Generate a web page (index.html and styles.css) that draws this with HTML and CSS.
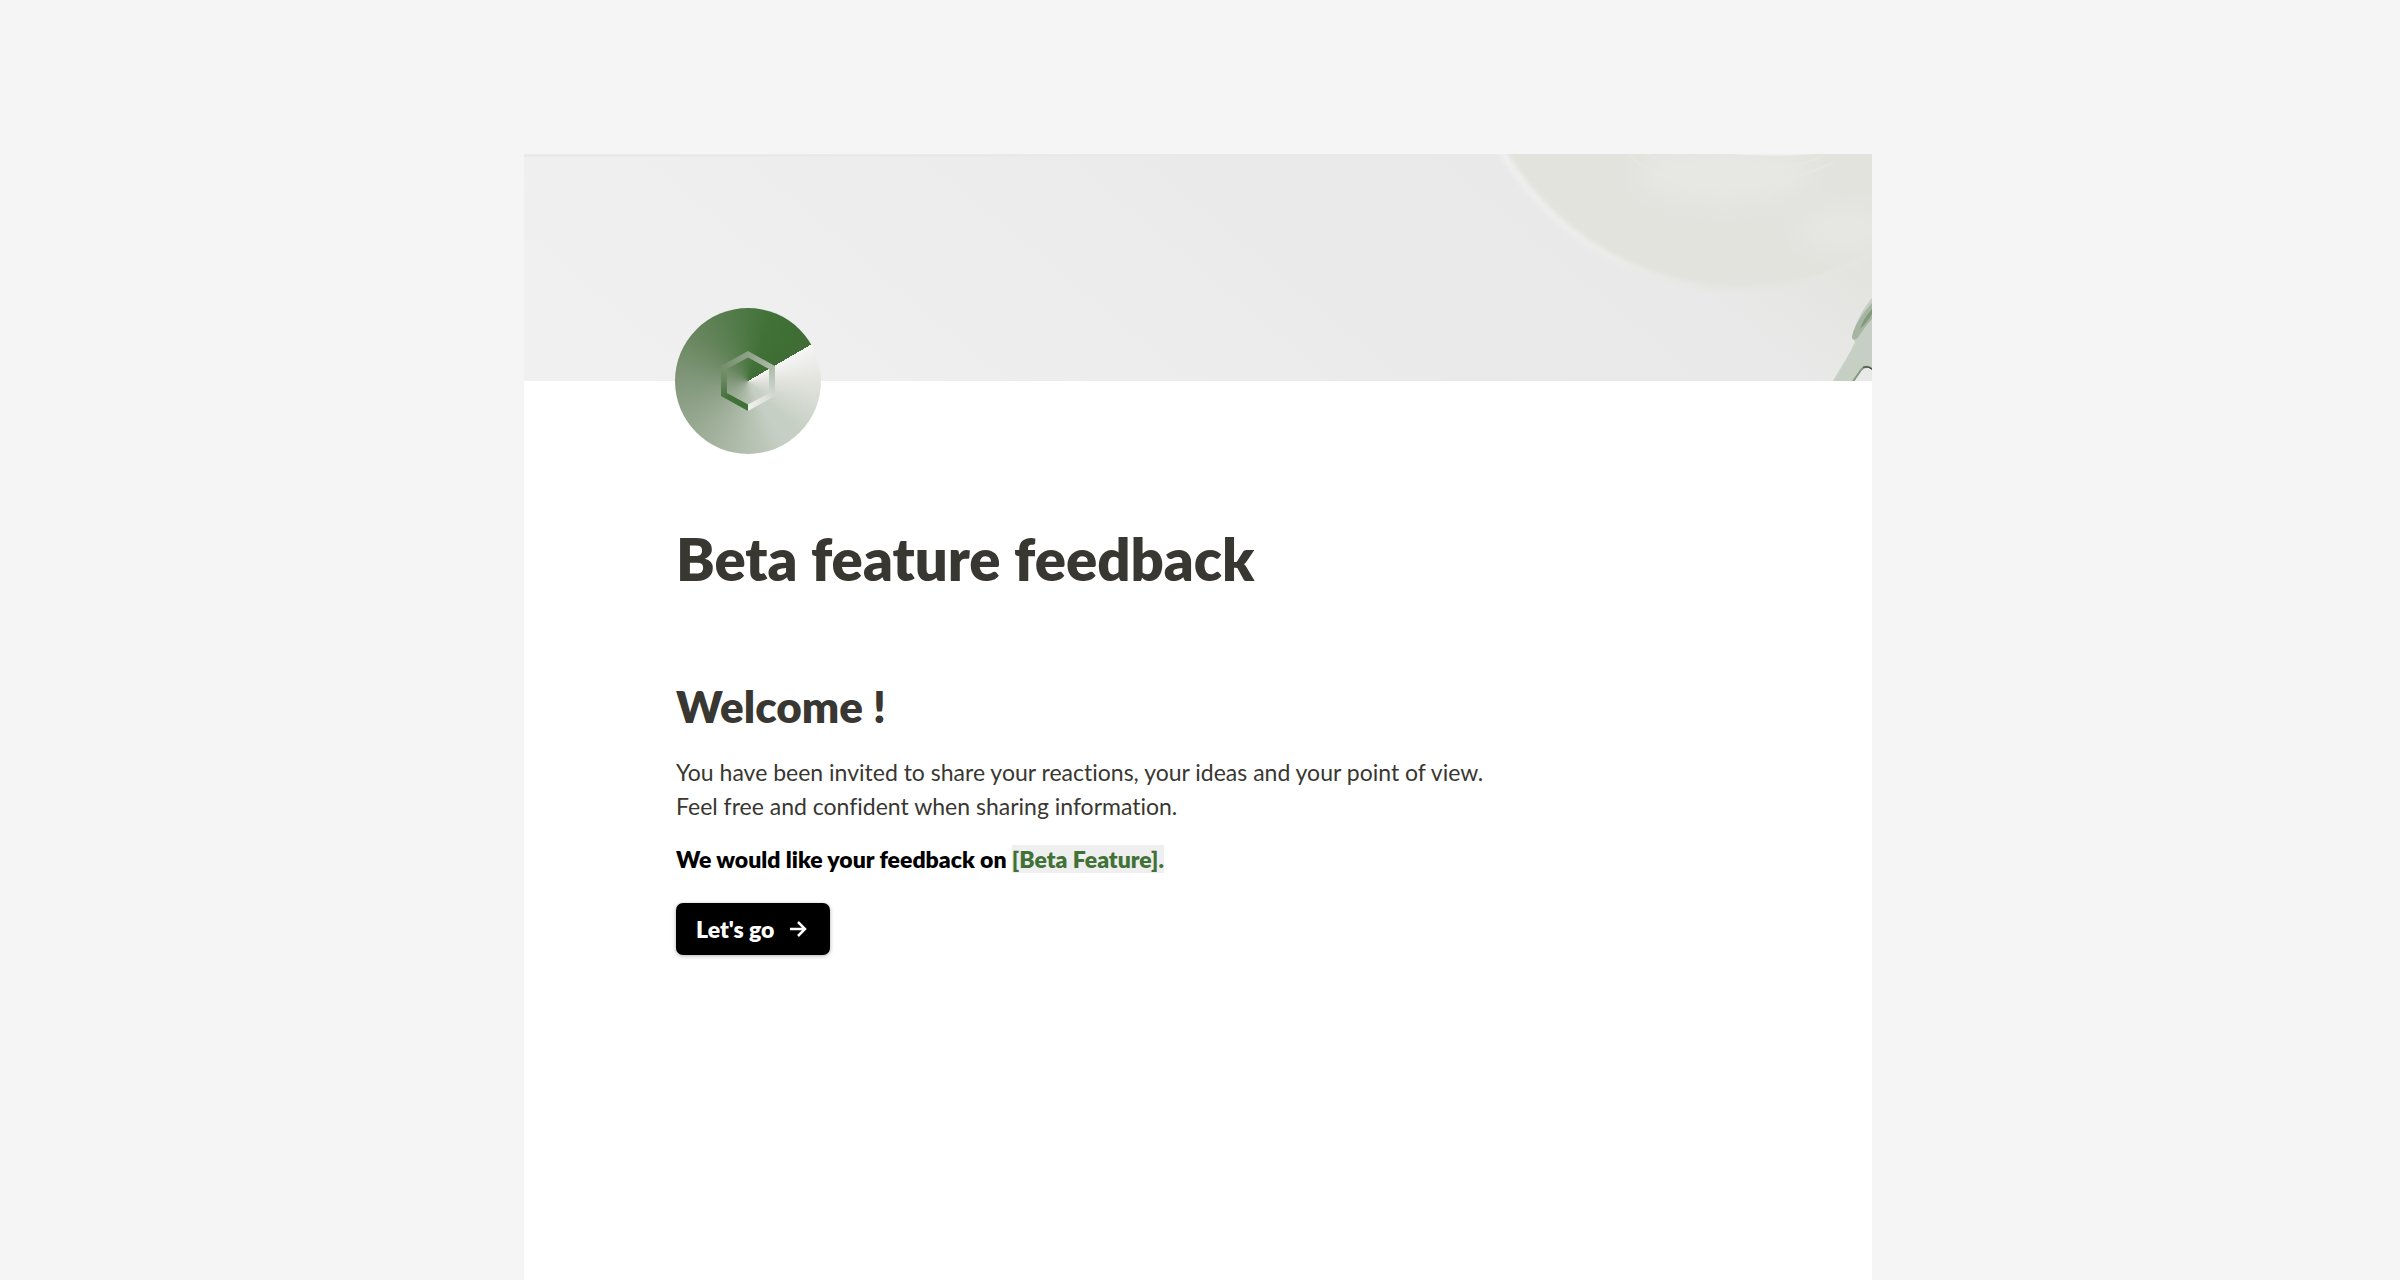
FILE: index.html
```
<!DOCTYPE html>
<html lang="en">
<head>
    <meta charset="UTF-8">
    <meta name="viewport" content="width=device-width, initial-scale=1.0">
    <title>Beta feature feedback</title>
    <link rel="stylesheet" href="styles.css">
</head>
<body>
    <main class="card">
        <header class="cover">
            <svg class="cover-art" viewBox="0 0 1348 227" preserveAspectRatio="xMaxYMin slice" aria-hidden="true">
                <defs>
                    <linearGradient id="wall" x1="0" y1="0.6" x2="1" y2="0.4">
                        <stop offset="0" stop-color="#f0f0f0"/>
                        <stop offset="0.35" stop-color="#ededed"/>
                        <stop offset="0.6" stop-color="#eaeaea"/>
                        <stop offset="0.84" stop-color="#e9e9e9"/>
                        <stop offset="0.95" stop-color="#e4e4e1"/>
                        <stop offset="1" stop-color="#e2e3dd"/>
                    </linearGradient>
                    <linearGradient id="rim" x1="0" y1="0" x2="1" y2="0">
                        <stop offset="0" stop-color="#f0f0f0"/>
                        <stop offset="0.25" stop-color="#ececeb"/>
                        <stop offset="0.45" stop-color="#e6e6e3"/>
                        <stop offset="1" stop-color="#e3e4df"/>
                    </linearGradient>
                    <filter id="soft" x="-20%" y="-20%" width="140%" height="140%">
                        <feGaussianBlur stdDeviation="2"/>
                    </filter>
                    <filter id="softer" x="-50%" y="-50%" width="200%" height="200%">
                        <feGaussianBlur stdDeviation="14"/>
                    </filter>
                </defs>
                <rect width="1348" height="227" fill="url(#wall)"/>
                <rect width="1348" height="3" fill="#e9e9e9"/>
                <!-- plate -->
                <circle cx="1215" cy="-139" r="277" fill="url(#rim)" filter="url(#soft)"/>
                <circle cx="1217" cy="-139" r="271" fill="#e2e3dd" filter="url(#soft)"/>
                <ellipse cx="1200" cy="20" rx="90" ry="30" fill="#e7e7e4" filter="url(#softer)"/>
                <ellipse cx="1320" cy="75" rx="50" ry="20" fill="#e7e7e4" filter="url(#softer)"/>
                <g fill="none" stroke="#e8e8e5" stroke-width="2" opacity="0.6">
                    <path d="M1104 0Q1135 30 1200 32Q1262 32 1310 8"/>
                    <path d="M1124 0Q1160 18 1205 18Q1260 18 1300 2"/>
                </g>
                <ellipse cx="1250" cy="-3" rx="50" ry="5" fill="#eeeeee"/>
                <!-- leaf -->
                <path d="M1348 144C1340 153 1331 169 1328 183L1331 188C1325 202 1317 213 1309 227H1348Z" fill="#c6cfc4"/>
                <path d="M1348 149C1338 160 1329 173 1328 184Q1331 188 1335 182Q1342 171 1348 165Z" fill="#a6b5a1"/>
                <path d="M1348 155Q1339 165 1336 175Q1343 169 1348 160Z" fill="#829a7b"/>
                <path d="M1328 229L1337 216Q1340 212 1345 213L1350 216V229Z" fill="#e9e9e9" stroke="#829a7b" stroke-width="2"/>
                <path d="M1339 213H1344L1348 215" fill="none" stroke="#393731"/>
            </svg>
            <div class="logo"><span class="logo-ring"></span></div>
        </header>
        <section class="content">
            <h1>Beta feature feedback</h1>
            <h2>Welcome !</h2>
            <p>You have been invited to share your reactions, your ideas and your point of view.<br>Feel free and confident when sharing information.</p>
            <p class="ask">We would like your feedback on <mark>[Beta Feature].</mark></p>
            <button type="button" class="start">
                Let's go
                <svg viewBox="0 0 24 24" width="24" height="24" aria-hidden="true">
                    <path d="M4 12H19M12 5L19 12L12 19" fill="none" stroke="currentColor" stroke-width="2.500"/>
                </svg>
            </button>
        </section>
    </main>
</body>
</html>
```
FILE: styles.css
```
* {
    box-sizing: border-box;
}
body {
    margin: 0;
    min-height: 100vh;
    display: flex;
    padding: 154px 528px 0 524px;
    background-color: #f5f5f5;
    font-family: Lato, sans-serif;
    font-size: 23px;
    line-height: 34px;
    font-variant-ligatures: none;
    color: #393731;
}
.card {
    flex: 1;
    background-color: #fff;
}
.cover {
    position: relative;
    height: 227px;
}
.cover-art {
    display: block;
    width: 100%;
    height: 100%;
}
/* logo sits over the lower edge of the cover */
.logo {
    position: absolute;
    left: 151px;
    bottom: -73px;
    width: 146px;
    height: 146px;
    display: grid;
    place-items: center;
    border-radius: 50%;
    background: conic-gradient(from 60deg, #f5f5f5, #e2e3dd 30deg, #c6cfc4 75deg, #c6cfc4 90deg, #a8b6a3 140deg, #8a9e84 195deg, #68865f 250deg, #417137 320deg, #3f6d35 360deg);
}
.logo-ring {
    width: 54px;
    height: 60px;
    background: conic-gradient(from 180deg, #417137, #417137 50deg, #68865f 90deg, #829a7b 150deg, #8fa189 180deg, #a8b6a3 230deg, #c6cfc4 280deg, #e2e3dd 320deg, #f0f0f0 360deg);
    clip-path: polygon(evenodd, 50% 0, 100% 25%, 100% 75%, 50% 100%, 0 75%, 0 25%, 50% 0, 50% 11%, 89% 30%, 89% 70%, 50% 89%, 11% 70%, 11% 30%, 50% 11%);
}
.content {
    padding: 143px 152px 64px;
}
h1 {
    margin: 0 0 86px;
    font-size: 58px;
    line-height: 70px;
    font-weight: 800;
}
h2 {
    margin: 0 0 23px;
    font-size: 44px;
    line-height: 52px;
    font-weight: 800;
}
p {
    margin: 0 0 19px;
}
.ask {
    margin-bottom: 27px;
    font-weight: 800;
    color: #000;
}
mark {
    background-color: #efefef;
    color: #417137;
}
.start {
    display: flex;
    align-items: center;
    gap: 12px;
    height: 52px;
    padding: 0 20px;
    border: none;
    border-radius: 7px;
    background-color: #000;
    color: #fff;
    font: inherit;
    font-weight: 800;
    box-shadow: 0 1px 4px rgba(0, 0, 0, 0.3);
    cursor: pointer;
}
.start:hover {
    background-color: #222;
}
@media (max-width: 1800px) {
    body {
        padding: 64px 5% 0;
    }
}
@media (max-width: 900px) {
    body {
        padding: 0;
    }
    .content {
        padding: 120px 24px 48px;
    }
    .logo {
        left: 24px;
    }
}
```
